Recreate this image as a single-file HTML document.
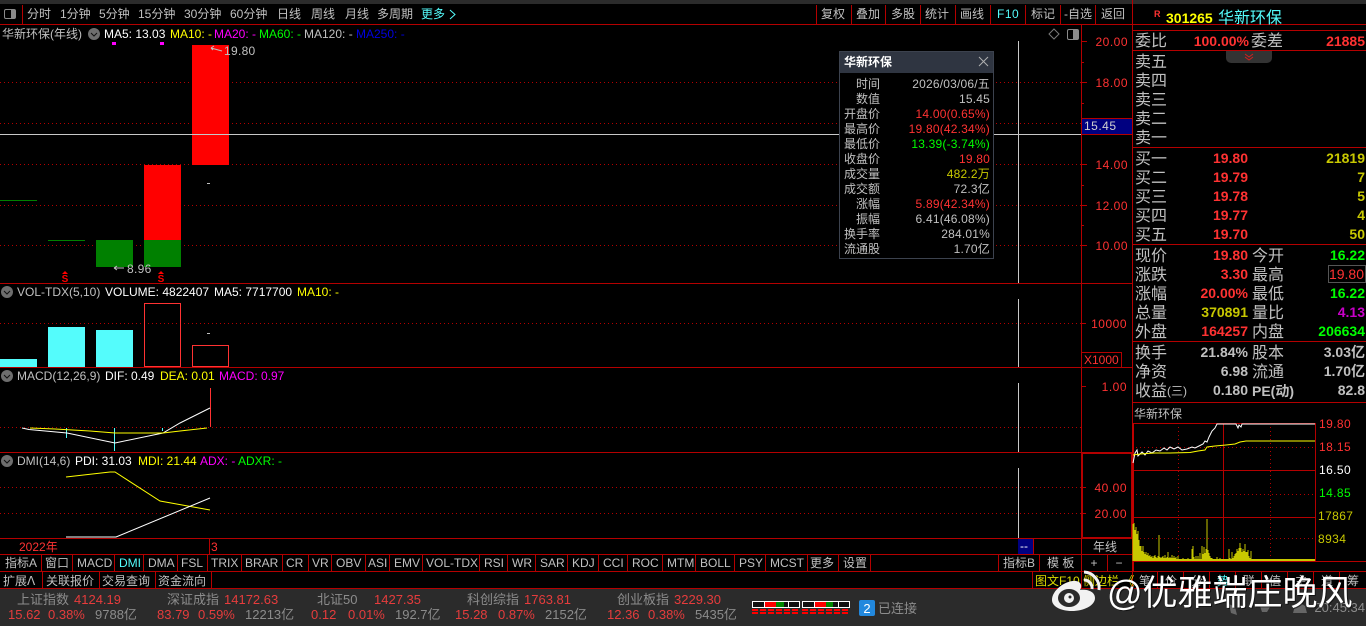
<!DOCTYPE html>
<html><head><meta charset="utf-8"><style>
html,body{margin:0;padding:0;background:#000;width:1366px;height:626px;overflow:hidden}
svg{display:block;font-family:"Liberation Sans","WenQuanYi Zen Hei","Noto Sans CJK SC",sans-serif;font-size:12px}
.l{stroke:#b40000;stroke-width:1;shape-rendering:crispEdges;fill:none}
.d{stroke:#b40000;stroke-width:1;stroke-dasharray:1 3;shape-rendering:crispEdges;fill:none}
.g{fill:#c0c0c0}.r{fill:#ff3232}.y{fill:#ffff00}.dy{fill:#c8c800}.c{fill:#54fcfc}.w{fill:#fff}.gr{fill:#00ff00}.m{fill:#ff00ff}.b{fill:#0000e0}
.e{text-anchor:end}.mid{text-anchor:middle}
.n{font-weight:bold;font-size:14px}
.s{font-size:16px}
.st{font-size:13px}.sg{fill:#8c8c8c}.sr{fill:#e63c3c}
</style></head><body>
<svg width="1366" height="626" viewBox="0 0 1366 626" xmlns="http://www.w3.org/2000/svg">
<rect width="1366" height="626" fill="#000"/>
<rect width="1366" height="4" fill="#2b2b2b"/>
<rect y="589" width="1366" height="37" fill="#2b2b2b"/>

<!-- toolbar -->
<g class="l">
<path d="M0 24.5H1366M22.5 5V24M816.5 5V24M851.5 5V24M885.5 5V24M920.5 5V24M955.5 5V24M990.5 5V24M1025.5 5V24M1060.5 5V24M1095.5 5V24M1132.5 0V589"/>
<path d="M1081.5 25V589"/>
<path d="M0 283.5H1132M0 367.5H1132M0 452.5H1132M0 538.5H1132M0 554.5H1132M0 571.5H1366M0 588.5H1366"/>
<path d="M1133 30.5H1366M1133 50.5H1366M1133 147.5H1366M1133 244.5H1366M1133 341.5H1366M1133 402.5H1366"/>
</g>
<g fill="none" stroke="#8a8a8a"><rect x="4.5" y="9.5" width="11" height="9" rx="1.5"/></g><rect x="11" y="10" width="4" height="8" fill="#8a8a8a"/>
<g class="g" font-size="12">
<text x="27" y="18">分时</text><text x="60" y="18">1分钟</text><text x="99" y="18">5分钟</text><text x="138" y="18">15分钟</text><text x="184" y="18">30分钟</text><text x="230" y="18">60分钟</text><text x="277" y="18">日线</text><text x="311" y="18">周线</text><text x="345" y="18">月线</text><text x="377" y="18">多周期</text>
<text x="821" y="18">复权</text><text x="856" y="18">叠加</text><text x="891" y="18">多股</text><text x="925" y="18">统计</text><text x="960" y="18">画线</text><text x="1031" y="18">标记</text><text x="1064" y="18">-自选</text><text x="1101" y="18">返回</text>
</g>
<text x="421" y="18" class="c">更多</text><path d="M450 10l5 4.5-5 4.5" stroke="#54fcfc" fill="none"/>
<text x="997" y="18" class="c" letter-spacing=".5">F10</text>

<!-- grid dotted -->
<g class="d">
<path d="M0 82.5H1081M0 123.5H1081M0 164.5H1081M0 205.5H1081M0 245.5H1081"/>
<path d="M0 323.5H1081M0 427.5H1081M0 487.5H1081M0 513.5H1081"/>
</g>
<!-- main candles -->
<rect x="192" y="45" width="37" height="120" fill="#ff0000"/>
<rect x="144" y="165" width="37" height="75" fill="#ff0000"/>
<rect x="144" y="240" width="37" height="27" fill="#008000"/>
<rect x="96" y="240" width="37" height="27" fill="#008000"/>
<rect x="48" y="240" width="37" height="1" fill="#008000"/>
<rect x="0" y="200" width="37" height="1" fill="#008000"/>
<rect x="207" y="183" width="3" height="1" fill="#c0c0c0"/>
<rect x="112" y="42" width="4" height="3" fill="#ff00ff"/><rect x="160" y="42" width="4" height="3" fill="#ff00ff"/>
<path d="M211 48l11 3M211 48l3-2M211 48l2 2" stroke="#c0c0c0" fill="none"/>
<text x="224" y="55" class="g" letter-spacing=".3">19.80</text>
<path d="M114 268h10M114 268l3-2M114 268l3 2" stroke="#c0c0c0" fill="none"/>
<text x="127" y="273" class="g" letter-spacing=".3">8.96</text>
<g fill="#ff0000"><path d="M65 271l3 3h-6z"/><path d="M161 271l3 3h-6z"/></g>
<text x="65" y="282" class="mid" fill="#ff0000" font-size="10" font-weight="bold">S</text>
<text x="161" y="282" class="mid" fill="#ff0000" font-size="10" font-weight="bold">S</text>
<!-- crosshair -->
<rect x="0" y="134" width="1081" height="1" fill="#c8c8c8"/>
<rect x="1018" y="41" width="1" height="242" fill="#c8c8c8"/>
<rect x="1018" y="299" width="1" height="68" fill="#c8c8c8"/>
<rect x="1018" y="383" width="1" height="69" fill="#c8c8c8"/>
<rect x="1018" y="468" width="1" height="70" fill="#c8c8c8"/>

<!-- legend -->
<text x="2" y="38" class="g">华新环保(年线)</text>
<circle cx="94" cy="34" r="6" fill="#6e6e6e"/><path d="M91 33l3 3 3-3" stroke="#111" fill="none"/>
<text x="104" y="38" class="w">MA5: 13.03</text><text x="170" y="38" class="y">MA10: -</text><text x="214" y="38" class="m">MA20: -</text><text x="259" y="38" class="gr">MA60: -</text><text x="304" y="38" class="g">MA120: -</text><text x="356" y="38" class="b">MA250: -</text>
<path d="M1054 29l5 5-5 5-5-5z" stroke="#7a7a7a" fill="none"/>
<rect x="1067.5" y="29.5" width="11" height="10" rx="1.5" stroke="#8a8a8a" fill="none"/><rect x="1073" y="30" width="5" height="9" fill="#8a8a8a"/>

<!-- axis -->
<g class="l"><path d="M1081 41.5h6M1081 62.5h3M1081 82.5h6M1081 103.5h3M1081 123.5h3M1081 164.5h6M1081 185.5h3M1081 205.5h6M1081 225.5h3M1081 245.5h6M1081 323.5h5M1081 386.5h5M1081 487.5h5M1081 513.5h5"/></g>
<g class="r" text-anchor="end" letter-spacing=".5"><text x="1128" y="46">20.00</text><text x="1128" y="87">18.00</text><text x="1128" y="169">14.00</text><text x="1128" y="210">12.00</text><text x="1128" y="250">10.00</text><text x="1127" y="328">10000</text><text x="1127" y="391">1.00</text><text x="1127" y="492">40.00</text><text x="1127" y="518">20.00</text></g>
<rect x="1082" y="118" width="50" height="16" fill="#000080"/><path class="l" d="M1082 118.5H1132M1082 134.5H1132"/>
<text x="1084" y="130" fill="#d0d0d0" letter-spacing=".5">15.45</text>
<rect x="1081.5" y="352.5" width="40" height="15" class="l"/><text x="1084" y="364" class="r">X1000</text>

<!-- VOL -->
<circle cx="7" cy="292" r="6" fill="#6e6e6e"/><path d="M4 291l3 3 3-3" stroke="#111" fill="none"/>
<text x="17" y="296" class="g">VOL-TDX(5,10)</text><text x="105" y="296" class="w">VOLUME: 4822407</text><text x="214" y="296" class="w">MA5: 7717700</text><text x="297" y="296" class="y">MA10: -</text>
<g fill="#54fcfc"><rect x="0" y="359" width="37" height="8"/><rect x="48" y="327" width="37" height="40"/><rect x="96" y="330" width="37" height="37"/></g>
<g fill="none" stroke="#ff3232" shape-rendering="crispEdges"><rect x="144.5" y="303.5" width="36" height="63"/><rect x="192.5" y="345.5" width="36" height="21"/></g>
<rect x="207" y="333" width="3" height="1" fill="#c0c0c0"/>

<!-- MACD -->
<circle cx="7" cy="376" r="6" fill="#6e6e6e"/><path d="M4 375l3 3 3-3" stroke="#111" fill="none"/>
<text x="17" y="380" class="g">MACD(12,26,9)</text><text x="105" y="380" class="w">DIF: 0.49</text><text x="160" y="380" class="y">DEA: 0.01</text><text x="219" y="380" class="m">MACD: 0.97</text>
<rect x="210" y="388" width="1" height="39" fill="#ff3232"/>
<g fill="#54fcfc"><rect x="66" y="428" width="1" height="10"/><rect x="114" y="428" width="1" height="23"/><rect x="162" y="428" width="1" height="3"/></g>
<path d="M22 428L29 429.5L67 433L115 443L163 433L180 423L210 408" fill="none" stroke="#fff"/>
<path d="M30 428L55 429L90 431L115 433L163 433L180 431L207 428" fill="none" stroke="#ffff00"/>

<!-- DMI -->
<circle cx="7" cy="461" r="6" fill="#6e6e6e"/><path d="M4 460l3 3 3-3" stroke="#111" fill="none"/>
<text x="17" y="465" class="g">DMI(14,6)</text><text x="75" y="465" class="w">PDI: 31.03</text><text x="138" y="465" class="y">MDI: 21.44</text><text x="200" y="465" class="m">ADX: -</text><text x="238" y="465" class="gr">ADXR: -</text>
<path d="M66 477L110 472L115 472L160 501L210 510" fill="none" stroke="#ffff00"/>
<path d="M66 537H116L210 498" fill="none" stroke="#fff"/>
<rect x="1082" y="453" width="50" height="85" fill="none" stroke="#b40000" stroke-width="2"/>

<!-- date bar -->
<text x="19" y="551" class="r">2022年</text><path class="l" d="M209.5 539V554"/><text x="211" y="551" class="r">3</text>
<rect x="1018" y="539" width="15" height="15" fill="#000080"/><text x="1020" y="550" class="w">--</text>
<path class="l" d="M1033.5 539V554"/>
<text x="1093" y="551" class="g">年线</text>

<!-- tabs -->
<path class="l" d="M41.5 555V571M72.5 555V571M114.5 555V571M143.5 555V571M177.5 555V571M207.5 555V571M241.5 555V571M282.5 555V571M308.5 555V571M331.5 555V571M365.5 555V571M389.5 555V571M422.5 555V571M479.5 555V571M507.5 555V571M535.5 555V571M567.5 555V571M598.5 555V571M627.5 555V571M662.5 555V571M695.5 555V571M734.5 555V571M765.5 555V571M807.5 555V571M838.5 555V571M870.5 555V571M998.5 555V571M1039.5 555V571M1107.5 555V571"/>
<g class="g">
<text x="5" y="567">指标A</text><text x="45" y="567">窗口</text><text x="77" y="567">MACD</text><text x="119" y="567" class="c">DMI</text><text x="148" y="567">DMA</text><text x="181" y="567">FSL</text><text x="211" y="567">TRIX</text><text x="245" y="567">BRAR</text><text x="286" y="567">CR</text><text x="312" y="567">VR</text><text x="336" y="567">OBV</text><text x="368" y="567">ASI</text><text x="394" y="567">EMV</text><text x="426" y="567">VOL-TDX</text><text x="484" y="567">RSI</text><text x="512" y="567">WR</text><text x="540" y="567">SAR</text><text x="572" y="567">KDJ</text><text x="603" y="567">CCI</text><text x="632" y="567">ROC</text><text x="667" y="567">MTM</text><text x="700" y="567">BOLL</text><text x="739" y="567">PSY</text><text x="770" y="567">MCST</text><text x="810" y="567">更多</text><text x="843" y="567">设置</text><text x="1003" y="567">指标B</text><text x="1047" y="567">模 板</text><text x="1094" y="567" class="mid">+</text><text x="1119" y="567" class="mid">−</text>
</g>
<path class="l" d="M42.5 572V588M99.5 572V588M155.5 572V588M211.5 572V588M1032.5 572V588M1157.5 572V588M1183.5 572V588M1209.5 572V588M1235.5 572V588M1261.5 572V588M1287.5 572V588M1313.5 572V588M1339.5 572V588"/>
<g class="g">
<text x="3" y="585">扩展ᐱ</text><text x="46" y="585">关联报价</text><text x="102" y="585">交易查询</text><text x="158" y="585">资金流向</text>
<text x="1139" y="585">笔</text><text x="1165" y="585">价</text><text x="1191" y="585">分</text><text x="1217" y="585" class="c">势</text><text x="1243" y="585">联</text><text x="1269" y="585">值</text><text x="1295" y="585">主</text><text x="1321" y="585">道</text><text x="1347" y="585">筹</text>
</g>
<text x="1035" y="585" class="y" opacity=".85">图文F10</text><text x="1083" y="585" class="y" opacity=".85">侧边栏 《</text>

<!-- status -->
<g class="st">
<g class="sg"><text x="17" y="604">上证指数</text><text x="167" y="604">深证成指</text><text x="317" y="604">北证50</text><text x="467" y="604">科创综指</text><text x="617" y="604">创业板指</text>
<text x="95" y="619">9788亿</text><text x="245" y="619">12213亿</text><text x="395" y="619">192.7亿</text><text x="545" y="619">2152亿</text><text x="695" y="619">5435亿</text></g>
<g class="sr"><text x="74" y="604">4124.19</text><text x="224" y="604">14172.63</text><text x="374" y="604">1427.35</text><text x="524" y="604">1763.81</text><text x="674" y="604">3229.30</text>
<text x="8" y="619">15.62</text><text x="48" y="619">0.38%</text><text x="157" y="619">83.79</text><text x="198" y="619">0.59%</text><text x="311" y="619">0.12</text><text x="348" y="619">0.01%</text><text x="455" y="619">15.28</text><text x="498" y="619">0.87%</text><text x="607" y="619">12.36</text><text x="648" y="619">0.38%</text></g>
</g>
<g shape-rendering="crispEdges">
<rect x="752.5" y="601.5" width="47" height="6" fill="#111" stroke="#fff"/><rect x="765" y="602" width="11" height="5" fill="#f00"/><rect x="776" y="602" width="8" height="5" fill="#080"/>
<path d="M764.5 602V607M788.5 602V607" stroke="#fff"/>
<rect x="802.5" y="601.5" width="47" height="6" fill="#111" stroke="#fff"/><rect x="815" y="602" width="11" height="5" fill="#f00"/><rect x="826" y="602" width="7" height="5" fill="#080"/>
<path d="M814.5 602V607M838.5 602V607" stroke="#fff"/>
<path d="M752 610H800M752 613H800M802 610H850M802 613H850" stroke="#f00" stroke-width="2" stroke-dasharray="6 2"/>
</g>
<rect x="859" y="600" width="16" height="16" rx="2" fill="#2288dd"/><text x="867" y="613" class="mid w" font-size="13">2</text>
<text x="878" y="613" class="st sg">已连接</text>

<!-- right panel header -->
<text x="1154" y="17" class="r" font-size="9" font-weight="bold">R</text>
<text x="1166" y="23" class="y" font-weight="bold" font-size="14">301265</text>
<text x="1218" y="23" class="c" font-size="16">华新环保</text>
<text x="1135" y="46" class="g s">委比</text><text x="1249" y="46" class="e r n">100.00%</text><text x="1251" y="46" class="g s">委差</text><text x="1365" y="46" class="e r n">21885</text>
<path d="M1226 51h46v7a5 5 0 0 1-5 5h-36a5 5 0 0 1-5-5z" fill="#333"/><path d="M1245 54l4 3 4-3M1245 57l4 3 4-3" stroke="#d02020" fill="none"/>
<g class="g s"><text x="1135" y="67">卖五</text><text x="1135" y="86">卖四</text><text x="1135" y="105">卖三</text><text x="1135" y="124">卖二</text><text x="1135" y="143">卖一</text>
<text x="1135" y="164">买一</text><text x="1135" y="183">买二</text><text x="1135" y="202">买三</text><text x="1135" y="221">买四</text><text x="1135" y="240">买五</text>
<text x="1135" y="261">现价</text><text x="1135" y="280">涨跌</text><text x="1135" y="299">涨幅</text><text x="1135" y="318">总量</text><text x="1135" y="337">外盘</text>
<text x="1252" y="261">今开</text><text x="1252" y="280">最高</text><text x="1252" y="299">最低</text><text x="1252" y="318">量比</text><text x="1252" y="337">内盘</text>
<text x="1135" y="358">换手</text><text x="1135" y="377">净资</text><text x="1135" y="396">收益<tspan font-size="12" dy="-1">(三)</tspan></text><text x="1252" y="358">股本</text><text x="1252" y="377">流通</text><text x="1252" y="396" font-size="14" font-weight="bold">PE(动)</text></g>
<g class="n e" text-anchor="end">
<g class="r"><text x="1248" y="163">19.80</text><text x="1248" y="182">19.79</text><text x="1248" y="201">19.78</text><text x="1248" y="220">19.77</text><text x="1248" y="239">19.70</text><text x="1248" y="260">19.80</text><text x="1248" y="279">3.30</text><text x="1248" y="298">20.00%</text><text x="1248" y="336">164257</text><text x="1364" y="279" font-weight="normal">19.80</text></g>
<g class="dy"><text x="1365" y="163">21819</text><text x="1365" y="182">7</text><text x="1365" y="201">5</text><text x="1365" y="220">4</text><text x="1365" y="239">50</text><text x="1248" y="317">370891</text></g>
<g class="gr"><text x="1365" y="260">16.22</text><text x="1365" y="298">16.22</text><text x="1365" y="336">206634</text></g>
<text x="1365" y="317" fill="#c800c8">4.13</text>
<g class="g"><text x="1248" y="357">21.84%</text><text x="1248" y="376">6.98</text><text x="1248" y="395">0.180</text><text x="1365" y="357">3.03亿</text><text x="1365" y="376">1.70亿</text><text x="1365" y="395">82.8</text></g>
</g>
<rect x="1328.5" y="265.5" width="37" height="17" fill="none" stroke="#555"/>

<!-- intraday -->
<text x="1134" y="418" class="g">华新环保</text>
<path class="l" d="M1132 423.5H1315M1132 470.5H1315M1132 517.5H1315M1132 561.5H1366M1315.5 423V561M1223.5 423V561"/>
<path class="d" d="M1132 447.5H1315M1132 494.5H1315M1132 538.5H1315M1178.5 423V561M1270.5 423V561"/>
<rect x="1132" y="423" width="2" height="148" fill="#c00000"/>
<path d="M1133 463L1135 453L1137 450L1138 456L1142 452L1145 455L1148 451L1152 453L1156 450L1160 451L1164 448L1167 450L1170 447L1174 449L1178 447L1182 450L1187 449L1192 447L1195 448L1199 446L1203 444L1205 441L1207 442L1209 437L1212 431L1215 428L1217 424H1236L1238 428L1239 425L1241 427L1242 424H1315" fill="none" stroke="#fff"/>
<path d="M1133 455L1140 454L1155 453L1170 453L1190 452.5L1198 451L1205 450L1207 447L1215 446L1226 445L1235 444L1240 442L1246 441H1315" fill="none" stroke="#ffff00"/>
<path d="M1133 561V524M1134 561V523M1135 561V530M1136 561V527M1137 561V534M1138 561V531M1139 561V540M1140 561V546M1141 561V546M1142 561V551M1143 561V546M1144 561V552M1145 561V554M1146 561V552M1147 561V555M1148 561V553M1149 561V556M1150 561V555M1151 561V557M1152 561V556M1153 561V558M1154 561V556M1155 561V555M1156 561V557M1157 561V558M1158 561V556M1159 561V535M1160 561V557M1161 561V558M1162 561V557M1163 561V556M1164 561V558M1165 561V555M1166 561V558M1167 561V557M1168 561V554M1169 561V558M1170 561V557M1171 561V558M1172 561V555M1173 561V558M1174 561V556M1175 561V558M1176 561V557M1177 561V559M1178 561V556M1180 561V559M1183 561V558M1185 561V559M1188 561V558M1190 561V559M1193 561V558M1196 561V559M1198 561V558M1200 561V559M1202 561V556M1203 561V554M1204 561V558M1206 561V559M1208 561V558M1209 561V559M1211 561V558M1212 561V558M1215 561V559M1217 561V557M1218 561V559M1220 561V558M1222 561V559M1226 561V559M1229 561V549M1230 561V558M1232 561V552M1233 561V558M1234 561V556M1235 561V554M1236 561V553M1237 561V549M1238 561V551M1239 561V548M1240 561V543M1241 561V548M1242 561V552M1243 561V549M1244 561V551M1245 561V544M1246 561V552M1247 561V552M1248 561V550M1249 561V556M1250 561V558M1251 561V551M1252 561V559" stroke="#c8c800" stroke-width="1" shape-rendering="crispEdges" fill="none"/>
<path d="M1192 561V549M1193 561V546M1194 561V557M1196 561V556M1198 561V556M1200 561V553M1202 561V546M1204 561V547M1205 561V553M1206 561V549M1207 561V519M1208 561V550M1209 561V553M1210 561V556M1168 561V552" stroke="#c8c800" stroke-width="1" shape-rendering="crispEdges" fill="none"/>
<rect x="1134" y="559" width="181" height="2" fill="#c8c800"/>
<g letter-spacing=".4"><text x="1319" y="428" class="r">19.80</text><text x="1319" y="451" class="r">18.15</text><text x="1319" y="474" class="w">16.50</text><text x="1319" y="497" class="gr">14.85</text><text x="1318" y="520" class="dy">17867</text><text x="1318" y="543" class="dy">8934</text></g>

<!-- tooltip -->
<rect x="839.5" y="51.5" width="154" height="207" fill="#000" stroke="#3c424e"/>
<rect x="840" y="52" width="153" height="21" fill="#2f3541"/>
<text x="844" y="66" class="w" font-weight="bold">华新环保</text>
<path d="M979 57l9 9M988 57l-9 9" stroke="#b0b0b0" fill="none"/>
<g class="g" text-anchor="end">
<text x="880" y="88">时间</text><text x="880" y="103">数值</text><text x="880" y="118">开盘价</text><text x="880" y="133">最高价</text><text x="880" y="148">最低价</text><text x="880" y="163">收盘价</text><text x="880" y="178">成交量</text><text x="880" y="193">成交额</text><text x="880" y="208">涨幅</text><text x="880" y="223">振幅</text><text x="880" y="238">换手率</text><text x="880" y="253">流通股</text>
<g letter-spacing=".2"><text x="990" y="88">2026/03/06/五</text><text x="990" y="103">15.45</text>
<text x="990" y="118" class="r">14.00(0.65%)</text><text x="990" y="133" class="r">19.80(42.34%)</text><text x="990" y="148" class="gr">13.39(-3.74%)</text><text x="990" y="163" class="r">19.80</text><text x="990" y="178" class="dy">482.2万</text><text x="990" y="193">72.3亿</text><text x="990" y="208" class="r">5.89(42.34%)</text><text x="990" y="223">6.41(46.08%)</text><text x="990" y="238">284.01%</text><text x="990" y="253">1.70亿</text></g>
</g>

<!-- clock & dim icons -->
<text x="1365" y="612" class="e st" fill="#8c8c8c">20:45:34</text>
<g fill="#666"><path d="M1229 604l6 3 2 8-6-2z"/><path d="M1260 606l10 1-3 5h-5z"/><path d="M1295 606l5-3 5 3 2 7h-14z"/></g>

<!-- watermark -->
<g>
<path d="M1052 600C1052 590 1066 580 1076 581C1082 582 1082 587 1080 590C1088 589 1095 592 1095 598C1095 606 1083 611 1072 611C1060 611 1052 606 1052 600Z" fill="#f2f2f2"/>
<ellipse cx="1069" cy="598" rx="11" ry="9" fill="#2b2b2b"/>
<circle cx="1069" cy="598" r="5" fill="#f2f2f2"/><circle cx="1070" cy="597" r="1.5" fill="#2b2b2b"/>
<path d="M1084 572a16 16 0 0 1 15 18M1084 580a8 8 0 0 1 8 9" fill="none" stroke="#f2f2f2" stroke-width="3"/>
<text x="1107" y="605" font-size="35" fill="#000" opacity=".55" dx="1" dy="1">@优雅端庄晚风</text>
<text x="1107" y="605" font-size="35" fill="#fff">@优雅端庄晚风</text>
</g>
</svg>
</body></html>
